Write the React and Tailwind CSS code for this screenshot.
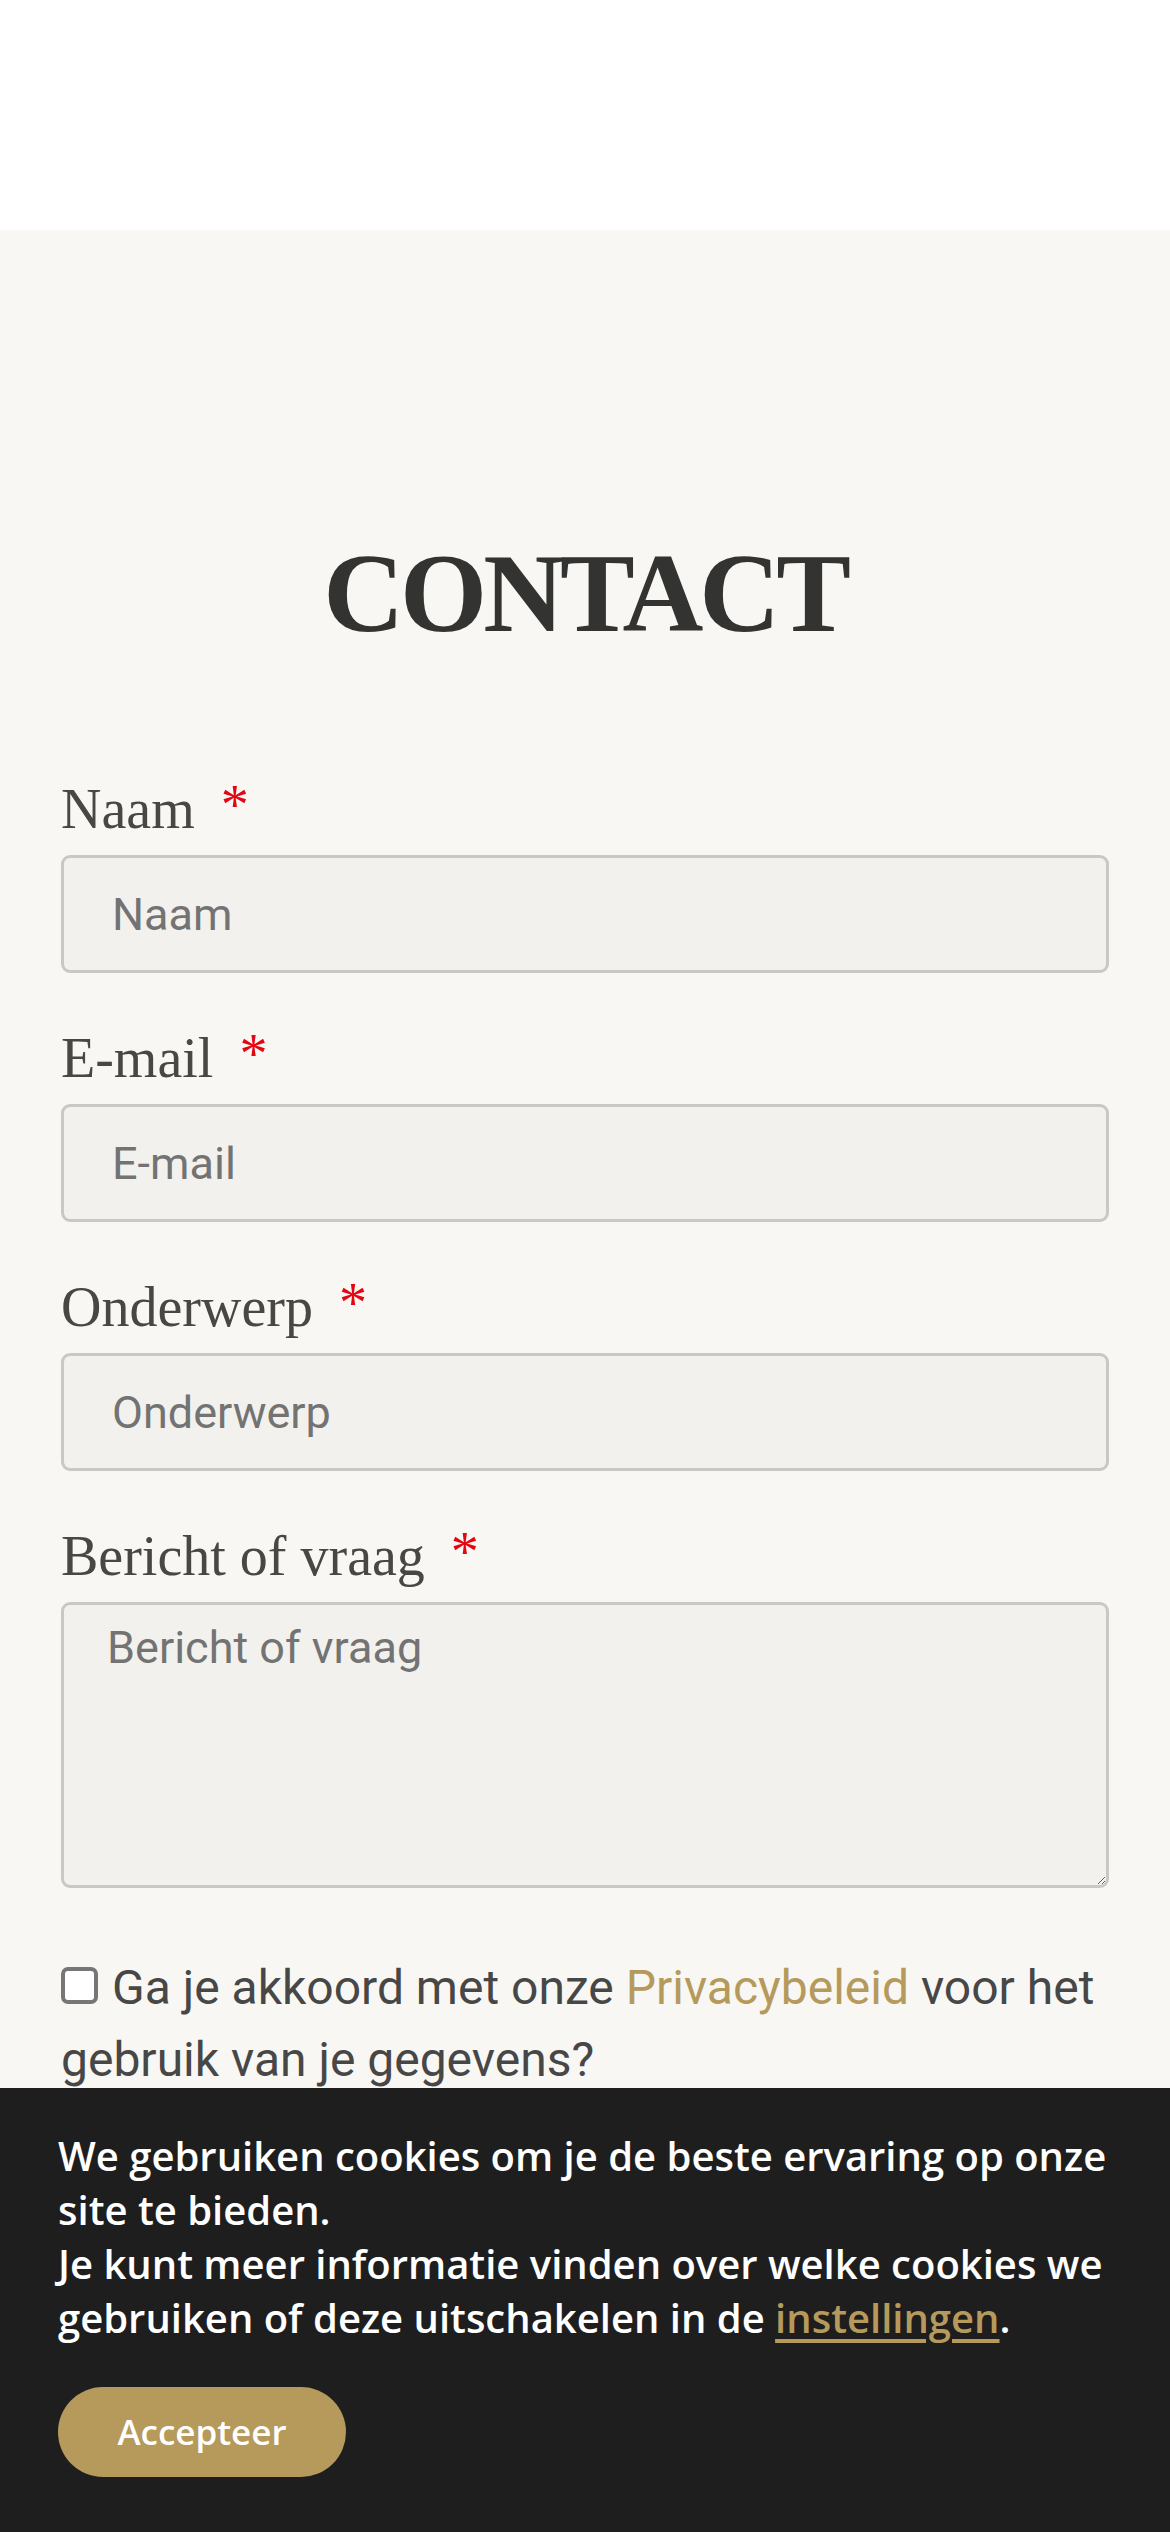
import { useState } from 'react';

const fields = [
  { name: 'naam', label: 'Naam', type: 'text' },
  { name: 'email', label: 'E-mail', type: 'email' },
  { name: 'onderwerp', label: 'Onderwerp', type: 'text' },
];

function Label({ children }) {
  return (
    <label className="mb-[16px] block font-['Liberation_Serif',serif] text-[56px] leading-[60px] text-[#484744]">
      {children}
      <span className="relative -top-[4px] ml-[26px] text-[#e30613]">*</span>
    </label>
  );
}

export default function App() {
  const [form, setForm] = useState({ naam: '', email: '', onderwerp: '', bericht: '' });
  const [agree, setAgree] = useState(false);
  const [accepted, setAccepted] = useState(false);

  const handleChange = (event) => {
    const { name, value } = event.target;
    setForm((current) => ({ ...current, [name]: value }));
  };

  return (
    <div className="min-h-[2532px] bg-[#f8f7f3]">
      <header className="h-[230px] bg-white" />

      <section className="px-[61px] pt-[307px] pb-[500px]">
        <h1 className="text-center font-['Liberation_Serif',serif] text-[112px] leading-none font-bold tracking-[-4px] text-[#333331]">
          CONTACT
        </h1>

        <form className="mt-[130px]" onSubmit={(e) => e.preventDefault()}>
          {fields.map((field) => (
            <div key={field.name} className="mb-[55px]">
              <Label>{field.label}</Label>
              <input
                name={field.name}
                type={field.type}
                value={form[field.name]}
                onChange={handleChange}
                placeholder={field.label}
                className="block h-[118px] w-full rounded-[9px] border-[3px] border-[#cac8c3] bg-[#f2f1ed] px-[48px] font-['Roboto',sans-serif] text-[45px] text-[#333] outline-none placeholder:text-[#737373]"
              />
            </div>
          ))}

          <div className="mb-[64px]">
            <Label>Bericht of vraag</Label>
            <textarea
              name="bericht"
              value={form.bericht}
              onChange={handleChange}
              placeholder="Bericht of vraag"
              className="block h-[286px] w-full rounded-[9px] border-[3px] border-[#cac8c3] bg-[#f2f1ed] px-[43px] pt-[16px] font-['Roboto',sans-serif] text-[45px] leading-[1.2] text-[#333] outline-none placeholder:text-[#737373]"
            />
          </div>

          <p className="font-['Roboto',sans-serif] text-[48px] leading-[72px] text-[#474747]">
            <input
              type="checkbox"
              checked={agree}
              onChange={(e) => setAgree(e.target.checked)}
              className="mr-[14px] inline-block h-[37px] w-[37px] appearance-none rounded-[7px] border-[4px] border-[#767676] bg-white align-baseline"
            />
            Ga je akkoord met onze <a href="#" className="text-[#b59a5c]">Privacybeleid</a> voor het gebruik van je gegevens?
          </p>
        </form>
      </section>

      {!accepted && (
        <div className="fixed bottom-0 left-0 right-0 h-[444px] bg-[#1e1e1e] px-[58px] pt-[41px] font-['Open_Sans',sans-serif] font-semibold text-white">
          <p className="text-[40px] leading-[54px]">
            We gebruiken cookies om je de beste ervaring op onze site te bieden.
            <br />
            Je kunt meer informatie vinden over welke cookies we gebruiken of deze uitschakelen in de{' '}
            <a href="#" className="text-[#b59a5b] underline underline-offset-[6px]">instellingen</a>.
          </p>
          <button
            type="button"
            onClick={() => setAccepted(true)}
            className="mt-[42px] h-[90px] w-[288px] rounded-full bg-[#b59a5b] text-[35px] font-semibold text-white"
          >
            Accepteer
          </button>
        </div>
      )}
    </div>
  );
}
